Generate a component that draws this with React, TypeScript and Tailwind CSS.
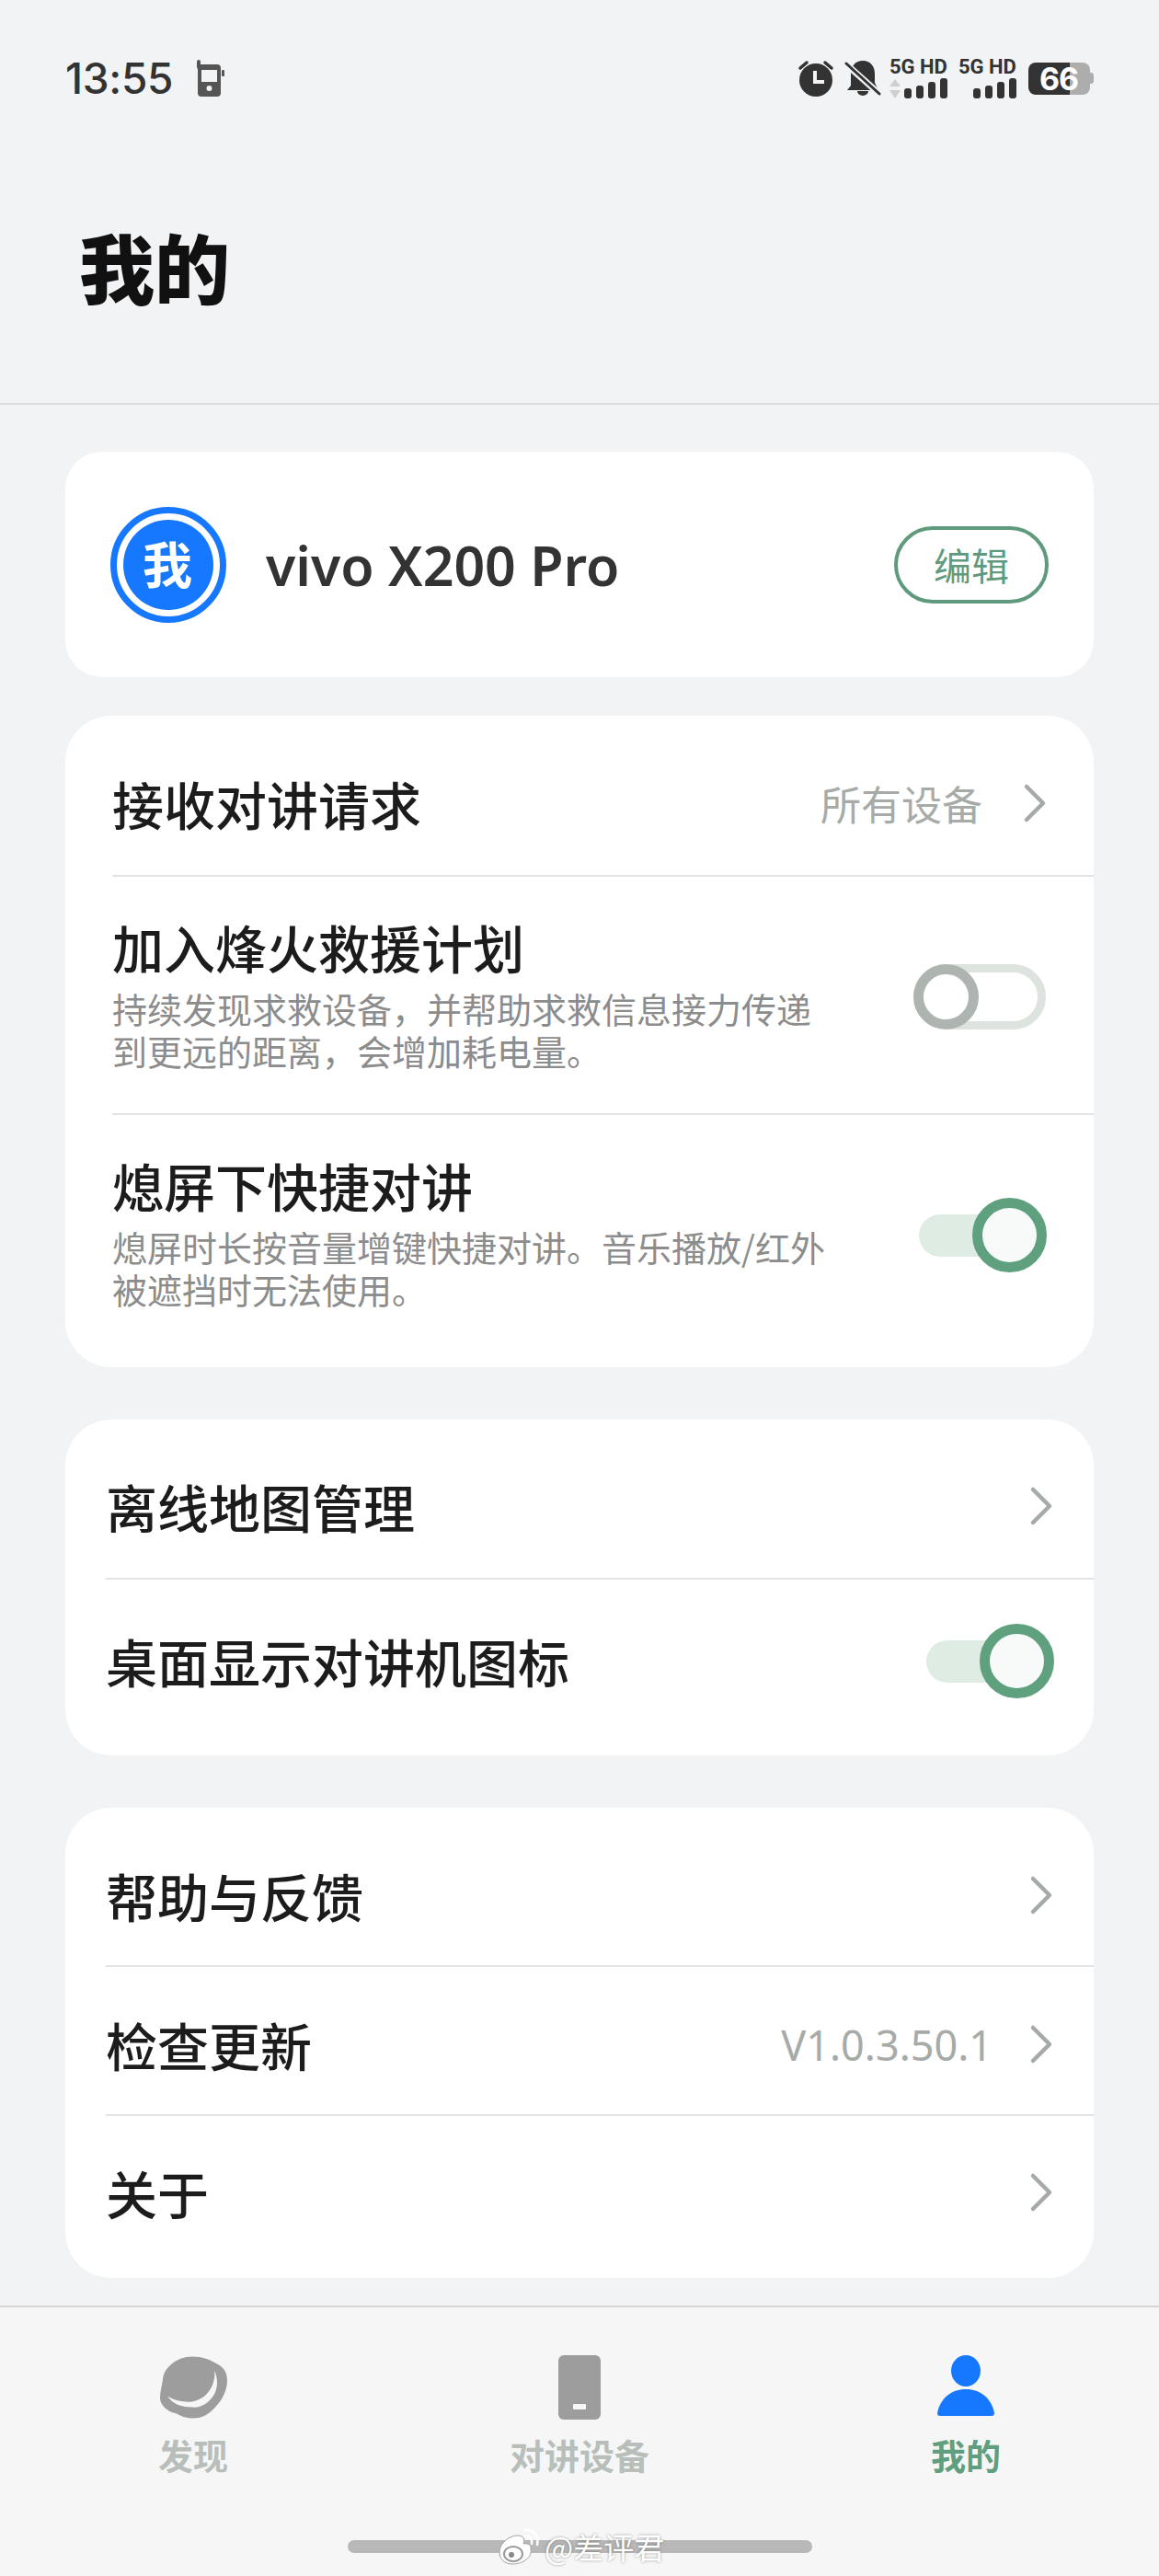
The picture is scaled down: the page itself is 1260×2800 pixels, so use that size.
const Chevron = () => (
  <svg width="26" height="44" viewBox="0 0 26 44" fill="none" className="shrink-0">
    <path d="M4 4 L22 22 L4 40" stroke="#a5aaa8" strokeWidth="4.5" strokeLinecap="round" strokeLinejoin="round" />
  </svg>
);

const Toggle = ({ on }: { on: boolean }) =>
  on ? (
    <div className="relative h-[81px] w-[139px] shrink-0">
      <div className="absolute left-0 top-[18px] h-[46px] w-[130px] rounded-full bg-[#dfece4]" />
      <div className="absolute right-0 top-0 size-[81px] rounded-full border-[11px] border-[#5fa07f] bg-[#f8faf9]" />
    </div>
  ) : (
    <div className="relative h-[71px] w-[144px] shrink-0">
      <div className="absolute right-0 top-0 h-[71px] w-[135px] rounded-full border-[9px] border-[#dde3df]" />
      <div className="absolute left-0 top-0 size-[71px] rounded-full border-[11px] border-[#aeb5b1] bg-white" />
    </div>
  );

const Bars = () => (
  <svg width="47" height="22" viewBox="0 0 47 22" fill="#333">
    <rect x="0" y="11" width="8" height="11" rx="3" />
    <rect x="13" y="8" width="8" height="14" rx="3" />
    <rect x="26" y="4" width="8" height="18" rx="3" />
    <rect x="39" y="0" width="8" height="22" rx="3" />
  </svg>
);

const Signal = ({ arrows }: { arrows?: boolean }) => (
  <div className="flex w-[63px] flex-col items-end">
    <span className="h-[19px] w-full whitespace-nowrap font-['Roboto',sans-serif] text-[22px] font-bold leading-[19px] text-[#333]">5G HD</span>
    <div className="mt-[3px] flex w-full items-end justify-between">
      {arrows ? (
        <svg width="12" height="21" viewBox="0 0 12 21" fill="#cfcfcf">
          <path d="M6 0 L12 8 L0 8 Z" />
          <path d="M0 12 L12 12 L6 21 Z" />
        </svg>
      ) : (
        <div />
      )}
      <Bars />
    </div>
  </div>
);

const StatusBar = () => (
  <div className="flex h-[50px] items-center justify-between pl-[71px] pr-[70px]">
    <div className="flex items-center gap-[26px]">
      <span className="font-['Inter',sans-serif] text-[46px] font-medium leading-none tracking-[-0.3px] text-[#333]">13:55</span>
      <svg width="30" height="40" viewBox="0 0 30 40">
        <path d="M1 2 V8 Q1 5 4 5 H22 Q26 5 26 9 V36 Q26 40 22 40 H5 Q1 40 1 36 Z" fill="#555" />
        <rect x="0" y="0" width="4" height="10" rx="2" fill="#555" />
        <rect x="5" y="11" width="17" height="13" fill="#f2f3f5" />
        <rect x="27" y="11" width="3" height="7" rx="1" fill="#555" />
        <circle cx="13.5" cy="31" r="3" fill="#f2f3f5" />
      </svg>
    </div>
    <div className="flex items-center">
      <svg width="40" height="40" viewBox="0 0 40 40" className="mr-[11px]">
        <circle cx="20" cy="22" r="18" fill="#333" />
        <path d="M3 9 L10 3 M37 9 L30 3" stroke="#333" strokeWidth="3.5" strokeLinecap="round" />
        <path d="M19 12 V24 H29" fill="none" stroke="#f2f3f5" strokeWidth="4" />
      </svg>
      <svg width="40" height="40" viewBox="0 0 40 40" className="mr-[9px]">
        <path d="M20 1 C29 1 33 8 33 15 V25 L37 33 H3 L7 28 V15 C7 8 11 1 20 1 Z" fill="#333" />
        <path d="M14 34 H26 A6 5 0 0 1 14 34 Z" fill="#333" />
        <path d="M0 3 L38 37" stroke="#f2f3f5" strokeWidth="7" />
        <path d="M2 4 L38 37" stroke="#333" strokeWidth="3" strokeLinecap="round" />
      </svg>
      <Signal arrows />
      <div className="ml-[12px]"><Signal /></div>
      <div className="relative ml-[13px] flex h-[35px] w-[72px] items-center">
        <div className="h-full w-[45px] rounded-l-[8px] bg-[#333]" />
        <div className="h-full w-[22px] rounded-r-[8px] bg-[#adadad]" />
        <div className="h-[12px] w-[4px] rounded-r-[3px] bg-[#adadad]" />
        <span className="absolute left-[12px] top-0 font-['Inter',sans-serif] text-[34px] font-bold leading-[35px] tracking-[-1px] text-white">66</span>
      </div>
    </div>
  </div>
);

const Header = () => (
  <header className="h-[440px] border-b-2 border-[#dcdcde] pt-[60px]">
    <StatusBar />
    <h1 className="mt-[129px] pl-[86px] text-[82px] font-black leading-[100px] text-[#111]">我的</h1>
  </header>
);

const ProfileCard = () => (
  <section className="flex h-[245px] items-center rounded-[40px] bg-white pl-[49px] pr-[49px]">
    <div className="flex size-[126px] shrink-0 items-center justify-center rounded-full border-[7px] border-[#1677ff] bg-white">
      <div className="flex size-[98px] items-center justify-center rounded-full bg-[#1677ff] pb-[4px] pr-[2px] text-[54px] font-bold leading-none text-white">我</div>
    </div>
    <span className="ml-[43px] flex-1 pt-[2px] font-['Noto_Sans',sans-serif] text-[59px] font-semibold leading-none text-[#333]">vivo X200 Pro</span>
    <button className="flex h-[84px] w-[168px] items-center justify-center rounded-full border-[4px] border-[#5f9a7c] text-[41px] leading-none text-[#5f9a7c]">编辑</button>
  </section>
);

const SettingsCard = () => (
  <section className="mt-[42px] h-[708px] rounded-[50px] bg-white pl-[51px]">
    <div className="flex h-[175px] items-center justify-between border-b-2 border-[#e3e3e3] pr-[51px] pt-[16px]">
      <span className="text-[56px] font-medium leading-[70px] text-[#1c1c1c]">接收对讲请求</span>
      <div className="flex items-center gap-[44px]">
        <span className="text-[44px] leading-none text-[#a6aba8]">所有设备</span>
        <Chevron />
      </div>
    </div>
    <div className="flex h-[259px] items-start justify-between border-b-2 border-[#e3e3e3] pr-[52px] pt-[41px]">
      <div>
        <div className="text-[56px] font-medium leading-[70px] text-[#1c1c1c]">加入烽火救援计划</div>
        <p className="mt-[9px] w-[780px] text-[38px] leading-[46px] text-[#8c8c8c]">持续发现求救设备，并帮助求救信息接力传递到更远的距离，会增加耗电量。</p>
      </div>
      <div className="pt-[54px]"><Toggle on={false} /></div>
    </div>
    <div className="flex items-start justify-between pr-[51px] pt-[41px]">
      <div>
        <div className="text-[56px] font-medium leading-[70px] text-[#1c1c1c]">熄屏下快捷对讲</div>
        <p className="mt-[9px] w-[800px] text-[38px] leading-[46px] text-[#8c8c8c]">熄屏时长按音量增键快捷对讲。音乐播放/红外被遮挡时无法使用。</p>
      </div>
      <div className="pt-[49px]"><Toggle on /></div>
    </div>
  </section>
);

const MapCard = () => (
  <section className="mt-[57px] h-[365px] rounded-[50px] bg-white pl-[44px]">
    <div className="flex h-[174px] items-center justify-between border-b-2 border-[#e3e3e3] pr-[44px] pt-[16px]">
      <span className="text-[56px] font-medium leading-[70px] text-[#1c1c1c]">离线地图管理</span>
      <Chevron />
    </div>
    <div className="flex h-[191px] items-center justify-between pb-[15px] pr-[43px]">
      <span className="text-[56px] font-medium leading-[70px] text-[#1c1c1c]">桌面显示对讲机图标</span>
      <Toggle on />
    </div>
  </section>
);

const LinkRow = ({ label, value, divider, h }: { label: string; value?: string; divider?: boolean; h: string }) => (
  <div className={`flex items-center justify-between pr-[44px] ${h} ${divider ? "border-b-2 border-[#e3e3e3]" : ""}`}>
    <span className="text-[56px] font-medium leading-[70px] text-[#1c1c1c]">{label}</span>
    <div className="flex items-center gap-[40px]">
      {value && <span className="font-['Noto_Sans',sans-serif] text-[45px] leading-none text-[#a6aba8]">{value}</span>}
      <Chevron />
    </div>
  </div>
);

const AboutCard = () => (
  <section className="mt-[57px] h-[511px] rounded-[50px] bg-white pl-[44px]">
    <LinkRow label="帮助与反馈" divider h="h-[173px] pt-[18px]" />
    <LinkRow label="检查更新" value="V1.0.3.50.1" divider h="h-[162px] pt-[8px]" />
    <LinkRow label="关于" h="h-[176px] pb-[10px]" />
  </section>
);

const BottomNav = () => (
  <nav className="relative mt-[30px] flex-1 border-t-2 border-[#d6d6d8] bg-[#f6f6f7]">
    <div className="grid grid-cols-3 pt-[52px]">
      <div className="flex flex-col items-center">
        <svg width="73" height="70" viewBox="0 0 73 67">
          <path d="M35 0 C46 0 54 3 62 8 C70 12 73 18 73 26 C73 36 68 47 60 55 C52 64 44 67 37 67 C29 67 23 65 18 62 C8 60 0 53 0 45 C0 38 2 32 3 25 C4 12 18 0 35 0 Z" fill="#9d9d9d" />
          <path d="M59 15 C63 24 63 33 59 41 C53 51 44 56 35 55 C24 55 14 52 8 43 C16 48 26 50 35 49 C46 47 53 40 57 31 C59 25 60 20 59 15 Z" fill="#f6f6f7" />
        </svg>
        <span className="mt-[18px] text-[38px] font-bold leading-[40px] text-[#b8bfba]">发现</span>
      </div>
      <div className="flex flex-col items-center">
        <svg width="46" height="70" viewBox="0 0 46 70">
          <rect width="46" height="70" rx="6" fill="#9d9d9d" />
          <rect x="16" y="53" width="14" height="6" rx="1" fill="#f6f6f7" />
        </svg>
        <span className="mt-[18px] text-[38px] font-bold leading-[40px] text-[#b8bfba]">对讲设备</span>
      </div>
      <div className="flex flex-col items-center">
        <svg width="64" height="70" viewBox="0 0 64 70">
          <ellipse cx="32" cy="17" rx="16" ry="17" fill="#1677ff" />
          <path d="M1 63 C4 47 16 37 32 37 C48 37 60 47 63 63 Q63 66 60 66 H4 Q1 66 1 63 Z" fill="#1677ff" />
        </svg>
        <span className="mt-[18px] text-[38px] font-bold leading-[40px] text-[#5f9f7f]">我的</span>
      </div>
    </div>
    <div className="mx-auto mt-[73px] h-[14px] w-[505px] rounded-full bg-[#b8b8b8]" />
    {/* watermark sits over the home indicator */}
    <div className="absolute left-[540px] top-[240px] flex items-center gap-[6px] text-white [text-shadow:0_0_3px_rgba(0,0,0,0.4)]">
      <svg width="46" height="40" viewBox="0 0 46 40" fill="none">
        <path d="M3 26 C3 16 14 8 23 8 C29 8 31 12 29 17 C34 16 38 18 37 23 C39 31 29 39 17 39 C9 39 3 34 3 26 Z" fill="#ffffff" stroke="#a0a0a0" strokeWidth="1" />
        <ellipse cx="18" cy="28" rx="10" ry="8" fill="none" stroke="#999" strokeWidth="2" />
        <circle cx="16" cy="29" r="3" fill="#888" />
        <path d="M30 8 C36 8 39 12 38 17" stroke="#fff" strokeWidth="2.5" strokeLinecap="round" />
        <path d="M31 2 C40 1 46 9 44 18" stroke="#fff" strokeWidth="2.5" strokeLinecap="round" />
      </svg>
      <span className="text-[33px] leading-none">@差评君</span>
    </div>
  </nav>
);

export default function App() {
  return (
    <div className="flex h-[2800px] w-[1260px] flex-col overflow-hidden bg-[#f2f3f5] font-['Noto_Sans_CJK_SC','Noto_Sans',sans-serif]">
      <Header />
      <main className="mx-[71px] mt-[51px]">
        <ProfileCard />
        <SettingsCard />
        <MapCard />
        <AboutCard />
      </main>
      <BottomNav />
    </div>
  );
}
